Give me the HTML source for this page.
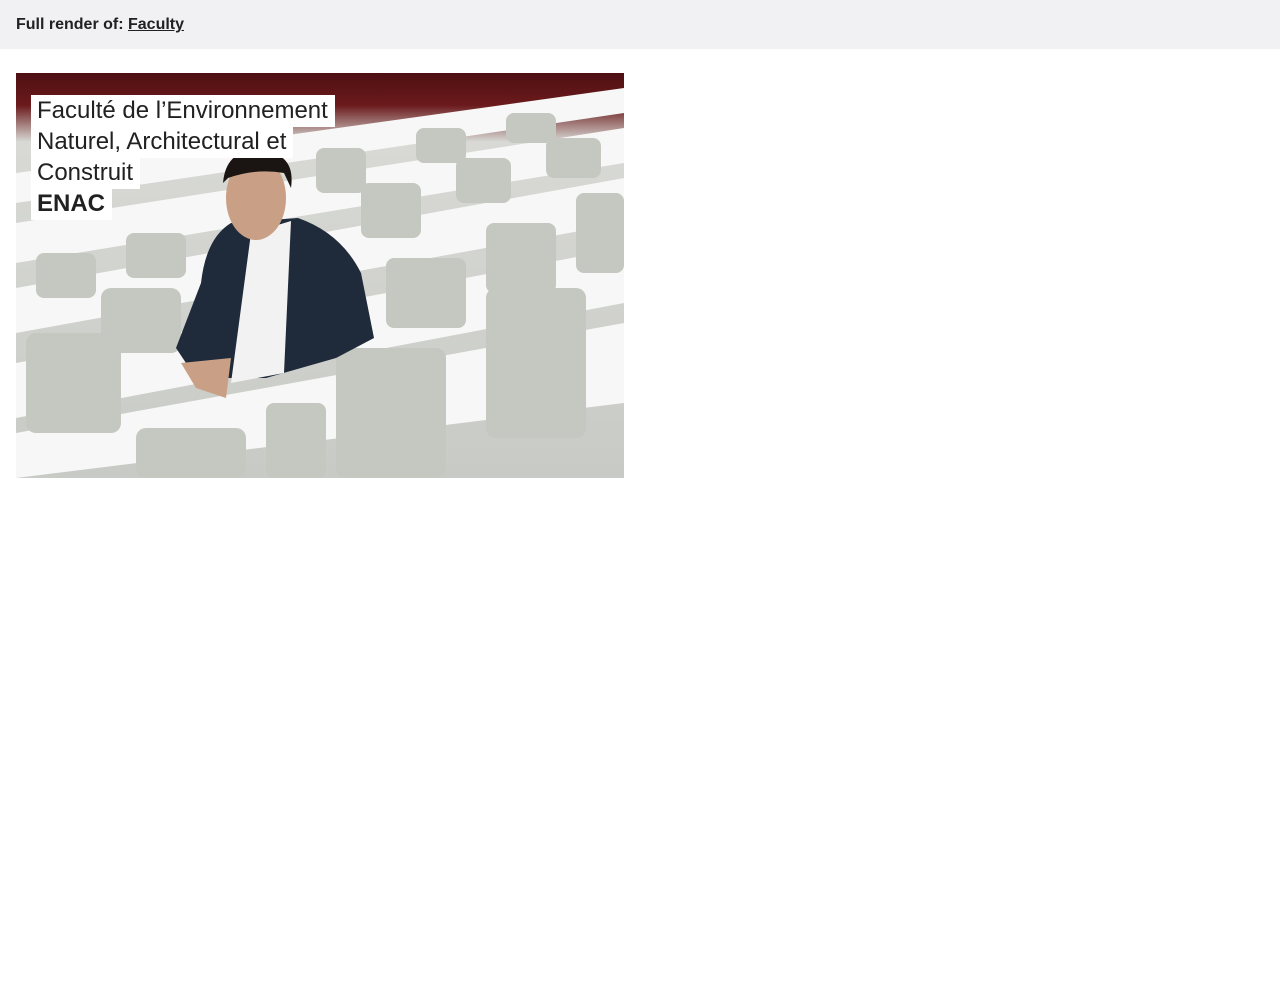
<!DOCTYPE html>
<html><head><meta charset="utf-8"><style>
body{margin:0;background:#fff;font-family:"Liberation Sans",sans-serif;}
.top{height:49px;background:#f1f1f3;box-sizing:border-box;padding:16px 16px 0;font-size:16px;font-weight:bold;color:#212121;}
.top u{color:#212121}
.card{position:absolute;left:16px;top:73px;width:608px;height:405px;overflow:hidden;}
.title{position:absolute;left:15px;top:22px;width:330px;font-size:24px;line-height:31px;color:#212121;}
.title span{background:#fff;padding:2px 7px 3px 6px;box-decoration-break:clone;-webkit-box-decoration-break:clone;}
</style></head><body>
<div class="top">Full render of: <u>Faculty</u></div>
<div class="card">
<svg width="608" height="405" viewBox="0 0 608 405">
<defs>
<linearGradient id="bg" x1="0" y1="0" x2="0" y2="1">
<stop offset="0" stop-color="#4e0f12"/><stop offset="0.08" stop-color="#6b1a1c"/><stop offset="0.17" stop-color="#d8d9d5"/><stop offset="1" stop-color="#c8cac5"/></linearGradient>
</defs>
<rect width="608" height="405" fill="url(#bg)"/>
<g fill="#f6f7f6">
<polygon points="0,100 608,15 608,40 0,130"/>
<polygon points="0,150 608,55 608,90 0,190"/>
<polygon points="0,215 608,105 608,150 0,260"/>
<polygon points="0,290 608,175 608,230 0,345"/>
<polygon points="0,360 608,250 608,330 0,405"/>
</g>
<g fill="#c5c8c0">
<rect x="20" y="180" width="60" height="45" rx="8"/><rect x="110" y="160" width="60" height="45" rx="8"/>
<rect x="85" y="215" width="80" height="65" rx="10"/><rect x="10" y="260" width="95" height="100" rx="10"/>
<rect x="120" y="355" width="110" height="50" rx="10"/><rect x="320" y="275" width="110" height="130" rx="10"/>
<rect x="470" y="215" width="100" height="150" rx="10"/><rect x="370" y="185" width="80" height="70" rx="8"/>
<rect x="470" y="150" width="70" height="70" rx="8"/><rect x="560" y="120" width="48" height="80" rx="8"/>
<rect x="345" y="110" width="60" height="55" rx="8"/><rect x="440" y="85" width="55" height="45" rx="8"/>
<rect x="530" y="65" width="55" height="40" rx="8"/><rect x="400" y="55" width="50" height="35" rx="8"/>
<rect x="490" y="40" width="50" height="30" rx="8"/><rect x="300" y="75" width="50" height="45" rx="8"/>
<rect x="250" y="330" width="60" height="75" rx="8"/>
</g>
<path d="M215 150 Q190 165 185 210 L160 275 L180 305 L250 305 L320 285 L358 265 L345 200 Q325 160 282 145 Z" fill="#1f2a3a"/>
<path d="M235 160 L275 148 L268 300 L215 310 Z" fill="#f2f2f2"/>
<ellipse cx="240" cy="125" rx="30" ry="42" fill="#c9a085"/>
<path d="M207 110 Q210 75 245 78 Q280 80 275 115 L268 100 Q240 95 212 105 Z" fill="#1a1512"/>
<path d="M165 290 L215 285 L210 325 L180 315 Z" fill="#c9a085"/>
</svg>
<div class="title"><span>Faculté de l’Environnement Naturel, Architectural et Construit</span><br><span><b>ENAC</b></span></div>
</div>
</body></html>
